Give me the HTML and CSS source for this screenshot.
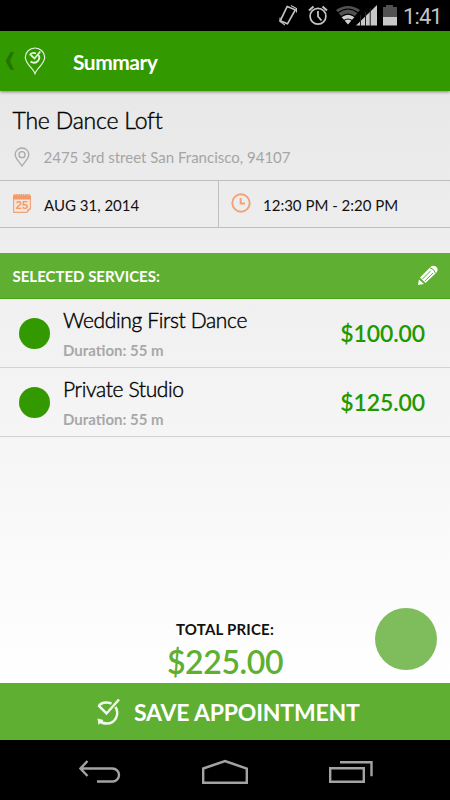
FILE: index.html
```html
<!DOCTYPE html>
<html lang="en">
<head>
<meta charset="utf-8">
<title>Summary</title>
<link rel="stylesheet" href="styles.css">
</head>
<body>
<div class="status">
  <svg class="status-icons" width="124" height="31" viewBox="0 0 124 31">
    <g fill="none" stroke="#c4c4c4">
      <path d="M11.200 6.500L19.300 9.800L11.500 23.800L4.200 20.800Z" stroke-width="1.700"/>
      <path d="M15 5.500l5.500 3v4M4 17.500v4l5 3.500" stroke-width="1.100"/>
      <circle cx="42" cy="16.300" r="7.900" stroke-width="1.700"/>
      <path d="M42 11v5.500l3.500 4" stroke-width="1.800"/>
      <path d="M33 10.500l4.500-4M51 10.500l-4.500-4" stroke-width="2"/>
    </g>
    <path d="M60 10Q72 2 84 10L72 24Z" fill="#515151"/>
    <path d="M65.500 17Q72 12 78.500 17L72 24.500Z" fill="#d0d0d0"/>
    <path d="M62 12.700Q72 5.200 82 12.700M65 16.800Q72 11.500 79 16.800M68 20.500Q72 17.500 76 20.500" fill="none" stroke="#000" stroke-width="1.100"/>
    <path d="M80 25.500L101 5v20.500Z" fill="#c8c8c8"/>
    <path d="M84.500 15v11M89.500 12v14M94.200 8v18" stroke="#222" stroke-width="1"/>
    <path d="M107 7h3V5h7v2h4v10h-14Z" fill="#515151"/>
    <path d="M107 17h14v8.500h-14Z" fill="#c8c8c8"/>
  </svg>
  <span class="clock">1:41</span>
</div>
<header class="header">
  <svg class="back" width="10" height="20" viewBox="0 0 10 20"><path d="M5.500 1h3.500L5 10 9 19H5.500L.5 10Z" fill="#247400"/></svg>
  <svg class="logo" width="22" height="28" viewBox="0 0 22 28" fill="none" stroke="#e6f4df">
    <path d="M11 26.500C9.500 21.500 1.300 17 1.300 10.300a9.700 9.300 0 0 1 19.400 0C20.700 17 12.500 21.500 11 26.500Z" stroke-width="1.200"/>
    <path d="M12 6.500C9.500 5.500 7 6 6.300 7.500L10.500 11.500 16.300 4.500M14.700 8.200C17 13 11.500 18 6.500 14.500" stroke-width="1.800"/>
  </svg>
  <h1 class="title">Summary</h1>
</header>
<main class="main">
  <section class="place">
    <h2 class="place-name"><span>The Dance Loft</span></h2>
    <div class="address">
      <svg width="16" height="20" viewBox="0 0 16 20" fill="none" stroke="#a9a9a9" stroke-width="1.300"><path d="M8 19C6.500 16 1.200 12 1.200 7.500a6.800 6.500 0 0 1 13.600 0C14.800 12 9.500 16 8 19Z"/><circle cx="8" cy="7.700" r="3"/></svg>
      <span>2475 3rd street San Francisco, 94107</span>
    </div>
  </section>
  <section class="when">
    <div class="cell date">
      <svg width="18" height="19" viewBox="0 0 18 19"><path d="M.6 2h16.800v12.500l-3.500 3.900H.6Z" fill="#f6e5dc" stroke="#f2a579" stroke-width="1.200"/><path d="M0 1.500h18v4H0Z" fill="#f29b69"/><path d="M1 1h16" stroke="#f29b69" stroke-width="2" stroke-dasharray="1.500 .7"/><path d="M14.700 18v-2.700h2.700" fill="none" stroke="#f2a579"/><text x="9" y="15.200" text-anchor="middle" textLength="12.500" lengthAdjust="spacingAndGlyphs" class="cal">25</text></svg>
      <span>AUG 31, 2014</span>
    </div>
    <div class="cell time">
      <svg width="20" height="20" viewBox="0 0 20 20" fill="none" stroke="#f2a274"><circle cx="10" cy="10" r="8.700" stroke-width="1.900"/><path d="M9.700 5v5.500H14" stroke-width="2"/></svg>
      <span>12:30 PM - 2:20 PM</span>
    </div>
  </section>
  <div class="band">
    <span>SELECTED SERVICES:</span>
    <svg width="20" height="20" viewBox="0 0 20 20"><path d="M2 12.500L12.500 2Q15-.5 18.500 2 21 5 18 8L7.500 18Z" fill="#fff"/><path d="M0 20L1 14 6 19Z" fill="#fff"/><path d="M.5 13.500L7 19M4.500 14L12.500 6M6.800 16L15 8M11.500 2.500Q16.500 3.500 17.500 8.500" fill="none" stroke="#5faf33" stroke-width="1"/></svg>
  </div>
  <ul class="services">
    <li class="service"><i class="dot"></i><div class="info"><div class="name">Wedding First Dance</div><div class="duration">Duration: 55 m</div></div><b class="price">$100.00</b></li>
    <li class="service"><i class="dot"></i><div class="info"><div class="name">Private Studio</div><div class="duration">Duration: 55 m</div></div><b class="price">$125.00</b></li>
  </ul>
  <section class="total">
    <div class="total-label">TOTAL PRICE:</div>
    <div class="total-price">$225.00</div>
    <i class="bubble"></i>
  </section>
</main>
<div class="save">
  <svg width="24" height="28" viewBox="0 0 24 28" fill="none" stroke="#f0f8ec"><path d="M14.500 5.500C9 3.500 3.500 4.500 2 8L9.500 15.500 22 1.500M18.500 9C23 16.500 18 25.500 10 25.500 6.500 25.500 4 24.500 2.500 23" stroke-width="2.500"/><path d="M.5 20.500l6 1.500-5 5Z" fill="#f0f8ec" stroke="none"/></svg>
  <span>SAVE APPOINTMENT</span>
</div>
<nav class="nav">
  <svg width="42" height="24" viewBox="0 0 42 24"><path d="M2 8.500h31.500a6.500 6.500 0 0 1 0 13H18M8.500 1L1.500 8.500 8.500 16"/></svg>
  <svg width="46" height="26" viewBox="0 0 46 26"><path d="M1.200 9.500L23 2l21.800 7.500v14.300H1.200Z"/></svg>
  <svg width="44" height="24" viewBox="0 0 44 24"><path d="M1.200 8.200h33.600v13.600H1.200ZM11 2.200h31.500v14"/></svg>
</nav>
</body>
</html>
```

FILE: styles.css
```css
* { box-sizing: border-box; }
body { margin: 0; width: 450px; height: 800px; overflow: hidden; display: flex; flex-direction: column; background: #000; font-family: Lato, "Liberation Sans", sans-serif; color: #111; }
svg { display: block; flex: none; }
span, b { white-space: nowrap; }
h1, h2, ul { margin: 0; padding: 0; font-weight: 400; }
.status { height: 31px; flex: none; display: flex; padding-left: 276px; background: #000; }
.clock { font: 400 22px/33px Roboto, sans-serif; color: #c4c4c4; margin-left: 3px; letter-spacing: -.9px; }
.header { height: 60px; flex: none; display: flex; align-items: center; background: #339900; padding-left: 5px; position: relative; box-shadow: 0 1px 3px rgba(0,0,0,.45); }
.logo { margin-left: 9px; }
.title { margin-left: 27px; margin-top: 2px; font-size: 21px; line-height: 26px; font-weight: 700; letter-spacing: -.5px; color: #fff; }
.main { height: 592px; flex: none; background: linear-gradient(#e8e8e8, #fff); display: flex; flex-direction: column; }
.place { height: 89px; padding: 15px 12.5px 0; }
.place-name { font-size: 23px; line-height: 28px; font-weight: 300; letter-spacing: -.2px; color: #000; -webkit-text-stroke: .4px #000; }
.address { display: flex; align-items: center; gap: 14px; margin: 13px 0 0 1px; font-size: 15px; line-height: 20px; color: #a5a5a5; }
.when { height: 48px; display: flex; border: solid #bebebe; border-width: 1px 0; }
.cell { display: flex; align-items: center; font-size: 15px; gap: 12px; }
.cell svg { position: relative; top: -1px; }
.cell span { padding-top: 1px; }
.date { width: 219px; padding-left: 13px; border-right: 1px solid #bebebe; gap: 13px; }
.time { padding-left: 12px; }
.cal { font: 900 10px "Liberation Sans", sans-serif; fill: #f29b69; }
.band { height: 46px; margin-top: 25px; background: #5faf33; border-bottom: 1px solid #4aa514; display: flex; align-items: center; justify-content: space-between; padding: 0 12px 0 12.5px; font-size: 15px; font-weight: 700; color: #fff; }
.band svg { position: relative; top: -1px; }
.band span { padding-top: 1px; }
.services { list-style: none; }
.service { height: 69px; border-bottom: 1px solid #d2d2d2; display: flex; align-items: center; padding: 0 25px 0 19px; }
.dot { width: 31px; height: 31px; border-radius: 50%; background: #339900; }
.info { margin-left: 13px; flex: 1; }
.name { font-size: 21px; line-height: 26px; font-weight: 300; letter-spacing: -.35px; color: #000; -webkit-text-stroke: .4px #000; }
.duration { font-size: 15px; line-height: 20px; font-weight: 700; color: #a8a8a8; margin-top: 7px; }
.price { font-size: 23px; font-weight: 600; letter-spacing: -.1px; color: #1f9900; }
.total { margin-top: auto; height: 64px; text-align: center; position: relative; }
.total-label { font-size: 15px; line-height: 20px; font-weight: 700; letter-spacing: .2px; }
.total-price { font-size: 32px; line-height: 40px; font-weight: 600; letter-spacing: -.4px; color: #5faf33; margin-top: 3px; }
.bubble { position: absolute; right: 13px; bottom: 13px; width: 62px; height: 62px; border-radius: 50%; background: #7fbd5c; }
.save { height: 57px; flex: none; background: #5faf33; display: flex; align-items: center; gap: 13px; padding-left: 97px; font-size: 23px; font-weight: 700; letter-spacing: -.2px; color: #fff; }
.nav { height: 60px; display: flex; align-items: center; padding: 3px 0 0 79px; gap: 81px; }
.nav path { fill: none; stroke: #a3a3a3; stroke-width: 2.4; }
```
